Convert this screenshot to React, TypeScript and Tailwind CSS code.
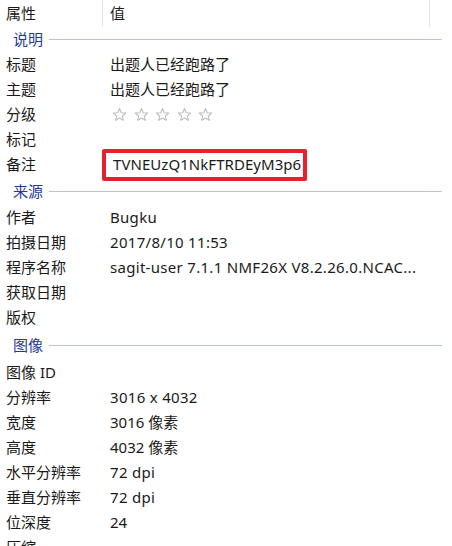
import React from "react";

const font = {
  fontFamily: '"Segoe UI", "Noto Sans", "Noto Sans CJK SC", sans-serif',
};

type Row = { label: string; value?: React.ReactNode };

function Star() {
  return (
    <svg width="15" height="15" viewBox="0 0 24 24" className="shrink-0">
      <path
        d="M12 2.5l2.8 6.6 7.1.6-5.4 4.7 1.6 7-6.1-3.7-6.1 3.7 1.6-7-5.4-4.7 7.1-.6z"
        fill="none"
        stroke="#bcbcbc"
        strokeWidth="1.7"
        strokeLinejoin="round"
      />
    </svg>
  );
}

function Stars() {
  return (
    <div className="flex items-center gap-[6.5px] pl-[2px]">
      <Star />
      <Star />
      <Star />
      <Star />
      <Star />
    </div>
  );
}

function Latin({ children }: { children: React.ReactNode }) {
  return <span className="tracking-[0.3px]">{children}</span>;
}

function PropRow({ label, value }: Row) {
  return (
    <div className="flex h-[25px] items-center">
      <div className="w-[110px] pl-[6px] shrink-0">{label}</div>
      <div className="flex-1 whitespace-nowrap">{value}</div>
    </div>
  );
}

function Section({ title, h }: { title: string; h: string }) {
  return (
    <div className={`flex items-center ${h}`}>
      <span className="pl-[13px] pr-[6px] text-[#1e3a9e]">{title}</span>
      <div className="h-px flex-1 bg-[#b6c4e6] mr-[10px]" />
    </div>
  );
}

export default function App() {
  return (
    <div
      className="w-[452px] h-[546px] overflow-hidden bg-white text-[15px] leading-none text-[#1a1a1a]"
      style={font}
    >
      <div className="flex h-[27px] items-center">
        <div className="w-[103px] pl-[6px] h-full flex items-center border-r border-[#e5e5e5]">
          属性
        </div>
        <div className="w-[327px] pl-[7px] h-full flex items-center border-r border-[#e5e5e5]">
          值
        </div>
      </div>
      <Section title="说明" h="h-[25px]" />
      <PropRow label="标题" value="出题人已经跑路了" />
      <PropRow label="主题" value="出题人已经跑路了" />
      <PropRow label="分级" value={<Stars />} />
      <PropRow label="标记" />
      <div className="flex h-[25px] items-center">
        <div className="w-[103px] pl-[6px] shrink-0">备注</div>
        <div className="ml-[-1px] h-[32px] flex items-center pl-[7px] pr-[2px] border-[4px] border-[#e8202b] rounded-[2px] whitespace-nowrap tracking-[0.05px]">
          TVNEUzQ1NkFTRDEyM3p6
        </div>
      </div>
      <Section title="来源" h="h-[28px]" />
      <PropRow label="作者" value={<Latin>Bugku</Latin>} />
      <PropRow label="拍摄日期" value={<Latin>2017/8/10 11:53</Latin>} />
      <PropRow
        label="程序名称"
        value={<Latin>sagit-user 7.1.1 NMF26X V8.2.26.0.NCAC...</Latin>}
      />
      <PropRow label="获取日期" />
      <PropRow label="版权" />
      <Section title="图像" h="h-[30px]" />
      <PropRow label="图像 ID" />
      <PropRow label="分辨率" value={<Latin>3016 x 4032</Latin>} />
      <PropRow label="宽度" value="3016 像素" />
      <PropRow label="高度" value="4032 像素" />
      <PropRow label="水平分辨率" value={<Latin>72 dpi</Latin>} />
      <PropRow label="垂直分辨率" value={<Latin>72 dpi</Latin>} />
      <PropRow label="位深度" value="24" />
      <PropRow label="压缩" />
    </div>
  );
}
